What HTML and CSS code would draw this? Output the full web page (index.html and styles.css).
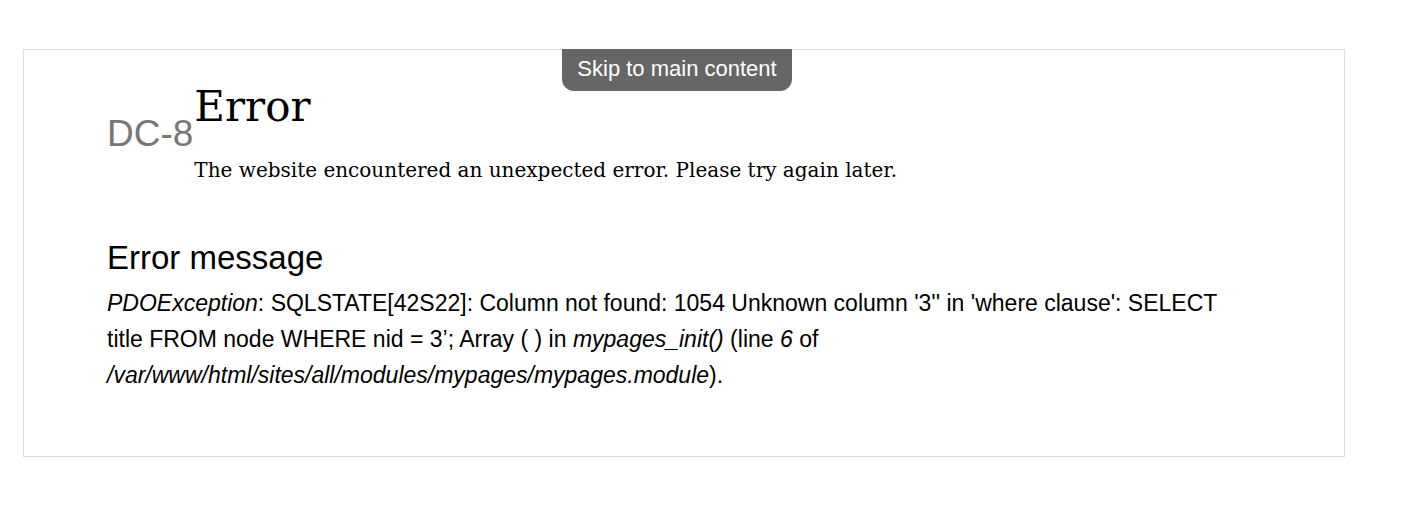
FILE: index.html
```html
<!DOCTYPE html>
<html lang="en">
<head>
<meta charset="utf-8">
<title>Error | DC-8</title>
<link rel="stylesheet" href="styles.css">
</head>
<body>
<a class="skip-link" href="#main">Skip to main content</a>
<div class="page">
  <header class="header">
    <div class="site-name">DC-8</div>
    <div class="title-block">
      <h1 class="title">Error</h1>
      <p class="intro">The website encountered an unexpected error. Please try again later.</p>
    </div>
  </header>
  <main id="main" class="content">
    <h2 class="message-title">Error message</h2>
    <p class="message"><em>PDOException</em>: SQLSTATE[42S22]: Column not found: 1054 Unknown column '3'' in 'where clause': SELECT title FROM node WHERE nid = 3’; Array ( ) in <em>mypages_init()</em> (line <em>6</em> of <em>/var/www/html/sites/all/modules/mypages/mypages.module</em>).</p>
  </main>
</div>
</body>
</html>
```

FILE: styles.css
```css
html, body {
  margin: 0;
  padding: 0;
  background: #fff;
}
body {
  font-family: "Liberation Sans", Arial, sans-serif;
  color: #000;
}
.skip-link {
  position: absolute;
  left: 562px;
  top: 49px;
  width: 230px;
  height: 42px;
  box-sizing: border-box;
  background: #666;
  color: #fff;
  text-decoration: none;
  font-size: 22px;
  line-height: 40px;
  text-align: center;
  border-radius: 0 0 12px 12px;
}
.page {
  margin: 49px 62px 0 23px;
  border: 1px solid #ddd;
  padding: 34px 84px 63px 83px;
}
.header {
  display: flex;
  align-items: flex-start;
}
.site-name {
  font-size: 37px;
  color: #777;
  margin-top: 28px;
  line-height: 1.2;
}
.title-block {
  display: flex;
  flex-direction: column;
  padding-left: 1px;
}
.title {
  font-family: "DejaVu Serif", Georgia, serif;
  font-weight: normal;
  font-size: 42px;
  line-height: 1.1;
  margin: 0;
}
.intro {
  font-family: "DejaVu Serif", Georgia, serif;
  font-size: 20px;
  margin: 28px 0 0;
}
.content {
  margin-top: 56px;
}
.message-title {
  font-size: 33px;
  font-weight: normal;
  margin: 0 0 7px;
  line-height: 1.2;
}
.message {
  font-size: 23px;
  line-height: 36px;
  margin: 0;
  max-width: 1130px;
}
```
